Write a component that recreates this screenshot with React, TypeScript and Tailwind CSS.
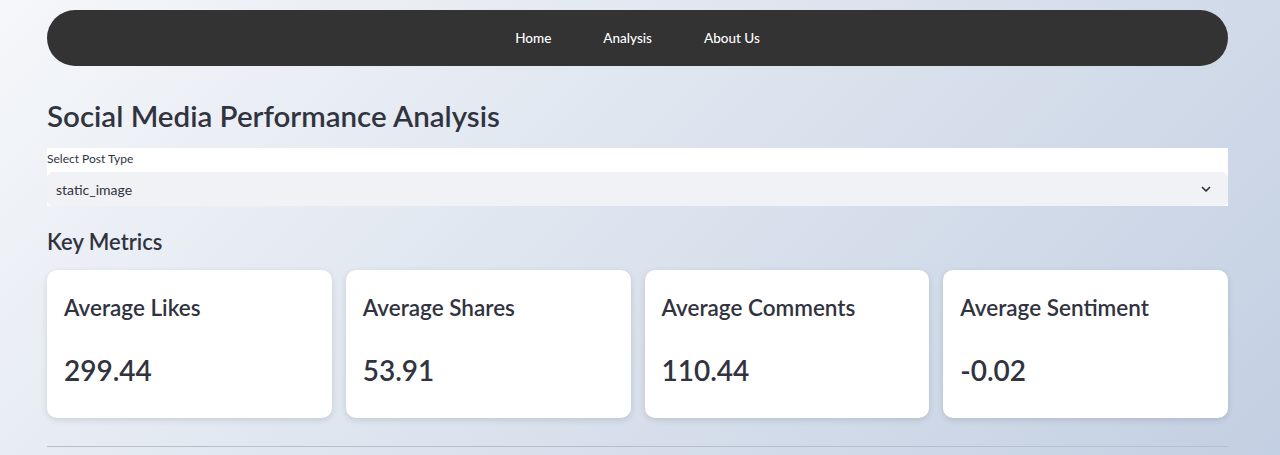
import React from "react";

const metrics = [
  { label: "Average Likes", value: "299.44" },
  { label: "Average Shares", value: "53.91" },
  { label: "Average Comments", value: "110.44" },
  { label: "Average Sentiment", value: "-0.02" },
];

export default function App() {
  return (
    <div
      className="min-h-[455px] w-full bg-[linear-gradient(135deg,#f5f7fa_0%,#c3cfe2_100%)] text-[#31333f] overflow-hidden"
      style={{ fontFamily: "Lato, 'Noto Sans', sans-serif" }}
    >
      <div className="ml-[47px] w-[1181px] pt-[10px]">
        <nav className="h-[56px] rounded-[28px] bg-[#333333] flex items-center justify-center gap-[52px] text-white text-[13.5px] font-medium">
          <span>Home</span>
          <span>Analysis</span>
          <span>About Us</span>
        </nav>
        <h1 className="mt-[30px] text-[29.5px] leading-[40px] font-semibold">Social Media Performance Analysis</h1>
        <div className="mt-[12px] bg-white">
          <div className="text-[12px] leading-[20px] pt-[1px] h-[24px]">Select Post Type</div>
          <div className="h-[34px] rounded-[6px] bg-[#f0f2f6] flex items-center justify-between px-[9px]">
            <span className="text-[14px]">static_image</span>
            <svg width="12" height="12" viewBox="0 0 24 24" fill="none" stroke="#31333f" strokeWidth="3.5" strokeLinecap="round" strokeLinejoin="round" className="mr-[7px]">
              <path d="M5 9l7 7 7-7" />
            </svg>
          </div>
        </div>
        <h2 className="mt-[20px] text-[22px] leading-[32px] font-semibold">Key Metrics</h2>
        <div className="mt-[12px] grid grid-cols-4 gap-[14px]">
          {metrics.map((m) => (
            <div key={m.label} className="h-[148px] bg-white rounded-[10px] shadow-[0_2px_6px_rgba(0,0,0,0.12)] px-[17px] pt-[23px]">
              <div className="text-[22.5px] leading-[30px] font-semibold">{m.label}</div>
              <div className="mt-[28px] text-[28px] leading-[38px] font-semibold">{m.value}</div>
            </div>
          ))}
        </div>
        <div className="mt-[28px] border-t border-[#b8bfcc]" />
      </div>
    </div>
  );
}
